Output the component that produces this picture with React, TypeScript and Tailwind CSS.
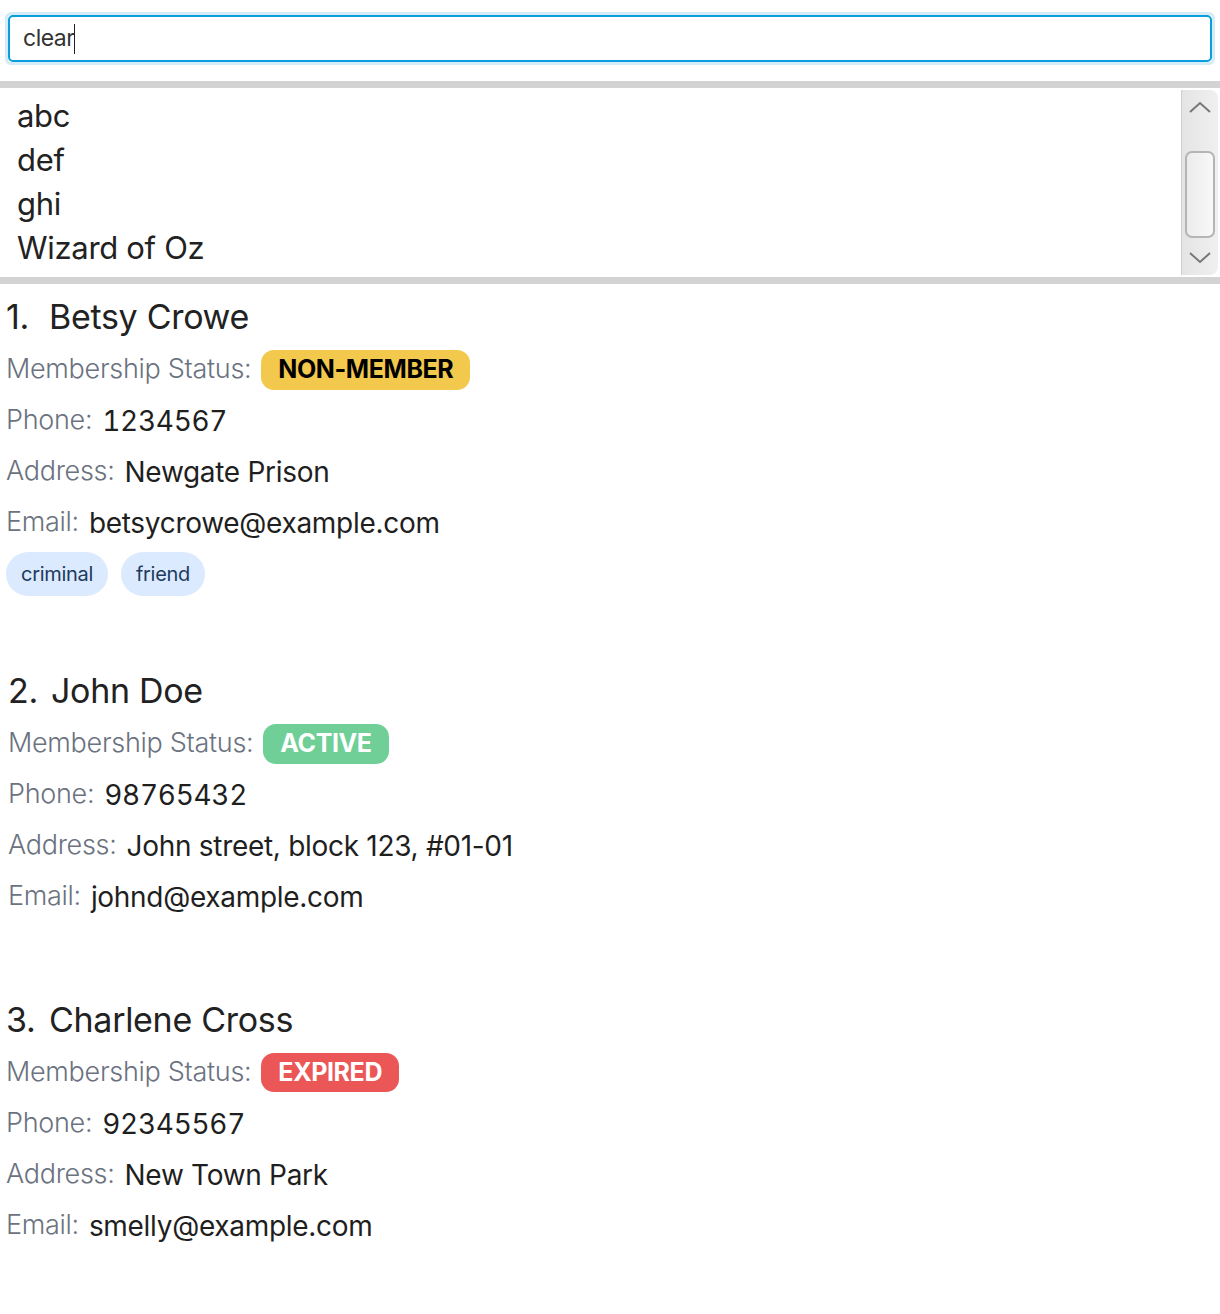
import { ReactNode } from 'react'

type Person = {
  name: string
  status: 'NON-MEMBER' | 'ACTIVE' | 'EXPIRED'
  phone: string
  address: string
  email: string
  tags: string[]
  shift?: boolean
}

const people: Person[] = [
  { name: 'Betsy Crowe', status: 'NON-MEMBER', phone: '1234567', address: 'Newgate Prison', email: 'betsycrowe@example.com', tags: ['criminal', 'friend'] },
  { name: 'John Doe', status: 'ACTIVE', phone: '98765432', address: 'John street, block 123, #01-01', email: 'johnd@example.com', tags: [], shift: true },
  { name: 'Charlene Cross', status: 'EXPIRED', phone: '92345567', address: 'New Town Park', email: 'smelly@example.com', tags: [] },
]

const suggestions = ['abc', 'def', 'ghi', 'Wizard of Oz']

function StatusBadge({ status }: { status: Person['status'] }) {
  if (status === 'NON-MEMBER') {
    return <span className="h-[40px] px-[17px] rounded-[13px] bg-[#f2c94c] text-black font-bold text-[25px] tracking-[-0.4px] flex items-center">NON-MEMBER</span>
  }
  if (status === 'ACTIVE') {
    return <span className="h-[40px] px-[17px] rounded-[13px] bg-[#6fcf97] text-white font-bold text-[25px] tracking-[-0.4px] flex items-center">ACTIVE</span>
  }
  return <span className="h-[39px] px-[17px] rounded-[13px] bg-[#eb5757] text-white font-bold text-[25px] tracking-[-0.4px] flex items-center">EXPIRED</span>
}

function Row({ label, children }: { label: string; children: ReactNode }) {
  return (
    <div className="h-[51px] flex items-center gap-[10px]">
      <span className="text-[27px] text-[#6b7280] font-light tracking-[-0.3px]">{label}</span>
      {children}
    </div>
  )
}

function Value({ children, digits }: { children: ReactNode; digits?: boolean }) {
  return (
    <span className={`text-[28px] text-[#1f1f1f] tracking-[-0.3px] ${digits ? 'tabular-nums' : ''}`}>{children}</span>
  )
}

function PersonCard({ p, index }: { p: Person; index: number }) {
  return (
    <div className={`pt-[10px] pb-[62px] ${p.shift ? 'pl-[8px]' : 'pl-[6px]'}`}>
      <div className="h-[44px] flex items-center text-[34px] text-[#222] tracking-[-0.3px]">
        <span className="w-[43px]">{index}.</span>
        <span>{p.name}</span>
      </div>
      <div className="mt-[6px]">
        <Row label="Membership Status:">
          <StatusBadge status={p.status} />
        </Row>
        <Row label="Phone:">
          <Value digits>{p.phone}</Value>
        </Row>
        <Row label="Address:">
          <Value>{p.address}</Value>
        </Row>
        <Row label="Email:">
          <Value>{p.email}</Value>
        </Row>
      </div>
      {p.tags.length > 0 ? (
        <div className="mt-[4px] flex gap-[13px]">
          {p.tags.map((t) => (
            <span key={t} className="h-[44px] px-[15px] rounded-full bg-[#dbeafe] text-[#1e3a5f] text-[20px] tracking-[-0.3px] flex items-center">
              {t}
            </span>
          ))}
        </div>
      ) : (
        <div className="h-[3px]" />
      )}
    </div>
  )
}

export default function App() {
  return (
    <div className="w-[1220px] min-h-[1314px] bg-white font-['Inter',sans-serif]">
      {/* command box */}
      <div className="pt-[12px] px-[5px] pb-[16px]">
        <div className="h-[53px] rounded-[6px] border-[3px] border-[#d4ecf8]">
          <div className="h-full rounded-[5px] border-2 border-[#0a9fdc] flex items-center pl-[13px] text-[23px] text-[#333] tracking-[-0.5px]">
            <span>clear</span>
            <span className="w-px h-[30px] bg-[#222]" />
          </div>
        </div>
      </div>

      {/* suggestion list */}
      <div className="border-y-[7px] border-[#d3d3d3] flex h-[203px]">
        <div className="flex-1 pl-[17px] pt-[6px] text-[31px] text-[#222] tracking-[-0.3px]">
          {suggestions.map((s) => (
            <div key={s} className="h-[44px] flex items-center">{s}</div>
          ))}
        </div>
        <div className="w-[37px] my-[2px] mr-[2px] rounded-tr-[8px] rounded-br-[8px] border-l border-[#d0d0d0] bg-gradient-to-r from-[#e4e4e4] to-[#f0f0f0] flex flex-col items-center">
          <svg width="26" height="16" viewBox="0 0 26 16" className="mt-[9px]">
            <path d="M3 13 L13 4 L23 13" fill="none" stroke="#777" strokeWidth="2" />
          </svg>
          <div className="mt-[36px] w-[30px] h-[87px] rounded-[7px] border-2 border-[#b5b5b5] bg-gradient-to-r from-[#ececec] to-[#f8f8f8]" />
          <svg width="26" height="16" viewBox="0 0 26 16" className="mt-[11px]">
            <path d="M3 4 L13 13 L23 4" fill="none" stroke="#777" strokeWidth="2" />
          </svg>
        </div>
      </div>

      {/* person list */}
      <div>
        {people.map((p, i) => (
          <PersonCard key={p.name} p={p} index={i + 1} />
        ))}
      </div>
    </div>
  )
}
